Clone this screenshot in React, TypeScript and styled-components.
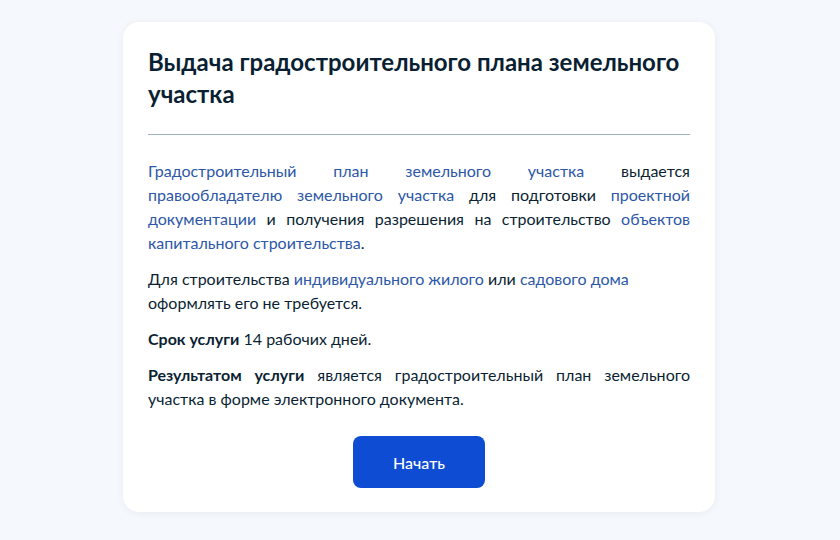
import React from 'react';
import styled, {createGlobalStyle} from "styled-components";

const GlobalStyle = createGlobalStyle`
  * {
    box-sizing: border-box;
  }
  body {
    margin: 0;
    background: #f5f8fc;
    font-family: Lato, "Noto Sans", sans-serif;
    color: #0b1f33;
  }
`

type LinkPart = { text: string, link?: boolean, bold?: boolean }

const paragraphs: LinkPart[][] = [
    [
        {text: "Градостроительный план земельного участка", link: true},
        {text: " выдается "},
        {text: "правообладателю земельного участка", link: true},
        {text: " для подготовки "},
        {text: "проектной документации", link: true},
        {text: " и получения разрешения на строительство "},
        {text: "объектов капитального строительства", link: true},
        {text: "."},
    ],
    [
        {text: "Для строительства "},
        {text: "индивидуального жилого", link: true},
        {text: " или "},
        {text: "садового дома", link: true},
        {text: " оформлять его не требуется."},
    ],
    [
        {text: "Срок услуги", bold: true},
        {text: " 14 рабочих дней."},
    ],
    [
        {text: "Результатом услуги", bold: true},
        {text: " является градостроительный план земельного участка в форме электронного документа."},
    ],
]

export default function App() {
    return (
        <>
            <GlobalStyle/>
            <Page>
                <Card>
                    <Title>Выдача градостроительного плана земельного участка</Title>
                    <Divider/>
                    <Content>
                        {paragraphs.map((p, i) => (
                            <Text key={i} $justify={i !== 1}>
                                {p.map((part, j) => part.link
                                    ? <TextLink key={j} href="#">{part.text}</TextLink>
                                    : part.bold
                                        ? <b key={j}>{part.text}</b>
                                        : <React.Fragment key={j}>{part.text}</React.Fragment>
                                )}
                            </Text>
                        ))}
                    </Content>
                    <Actions>
                        <StartButton>Начать</StartButton>
                    </Actions>
                </Card>
            </Page>
        </>
    );
}

const Page = styled.div`
  display: flex;
  justify-content: center;
  padding: 22px 2px 28px 0;
  min-height: 540px;
`

const Card = styled.div`
  width: 592px;
  background: #fff;
  border-radius: 16px;
  box-shadow: 0 1px 8px rgba(11, 31, 51, 0.06);
  padding: 24px 25px;
  display: flex;
  flex-direction: column;
`

const Title = styled.h1`
  margin: 0;
  font-size: 24px;
  line-height: 32px;
  font-weight: 700;
  color: #0b1f33;
`

const Divider = styled.hr`
  margin: 24px 0;
  border: none;
  border-top: 1px solid #9fb1bc;
`

const Content = styled.div`
  display: flex;
  flex-direction: column;
  gap: 12px;
`

const Text = styled.p<{ $justify: boolean }>`
  margin: 0;
  font-size: 16px;
  line-height: 24px;
  text-align: ${p => p.$justify ? "justify" : "left"};

  b {
    font-weight: 700;
  }
`

const TextLink = styled.a`
  color: #2d57a8;
  text-decoration: none;
`

const Actions = styled.div`
  display: flex;
  justify-content: center;
  margin-top: 25px;
`

const StartButton = styled.button`
  width: 132px;
  height: 52px;
  border: none;
  border-radius: 8px;
  background: #0d4cd3;
  color: #fff;
  font-family: Lato, "Noto Sans", sans-serif;
  font-size: 16px;
  font-weight: 500;
  cursor: pointer;
`
